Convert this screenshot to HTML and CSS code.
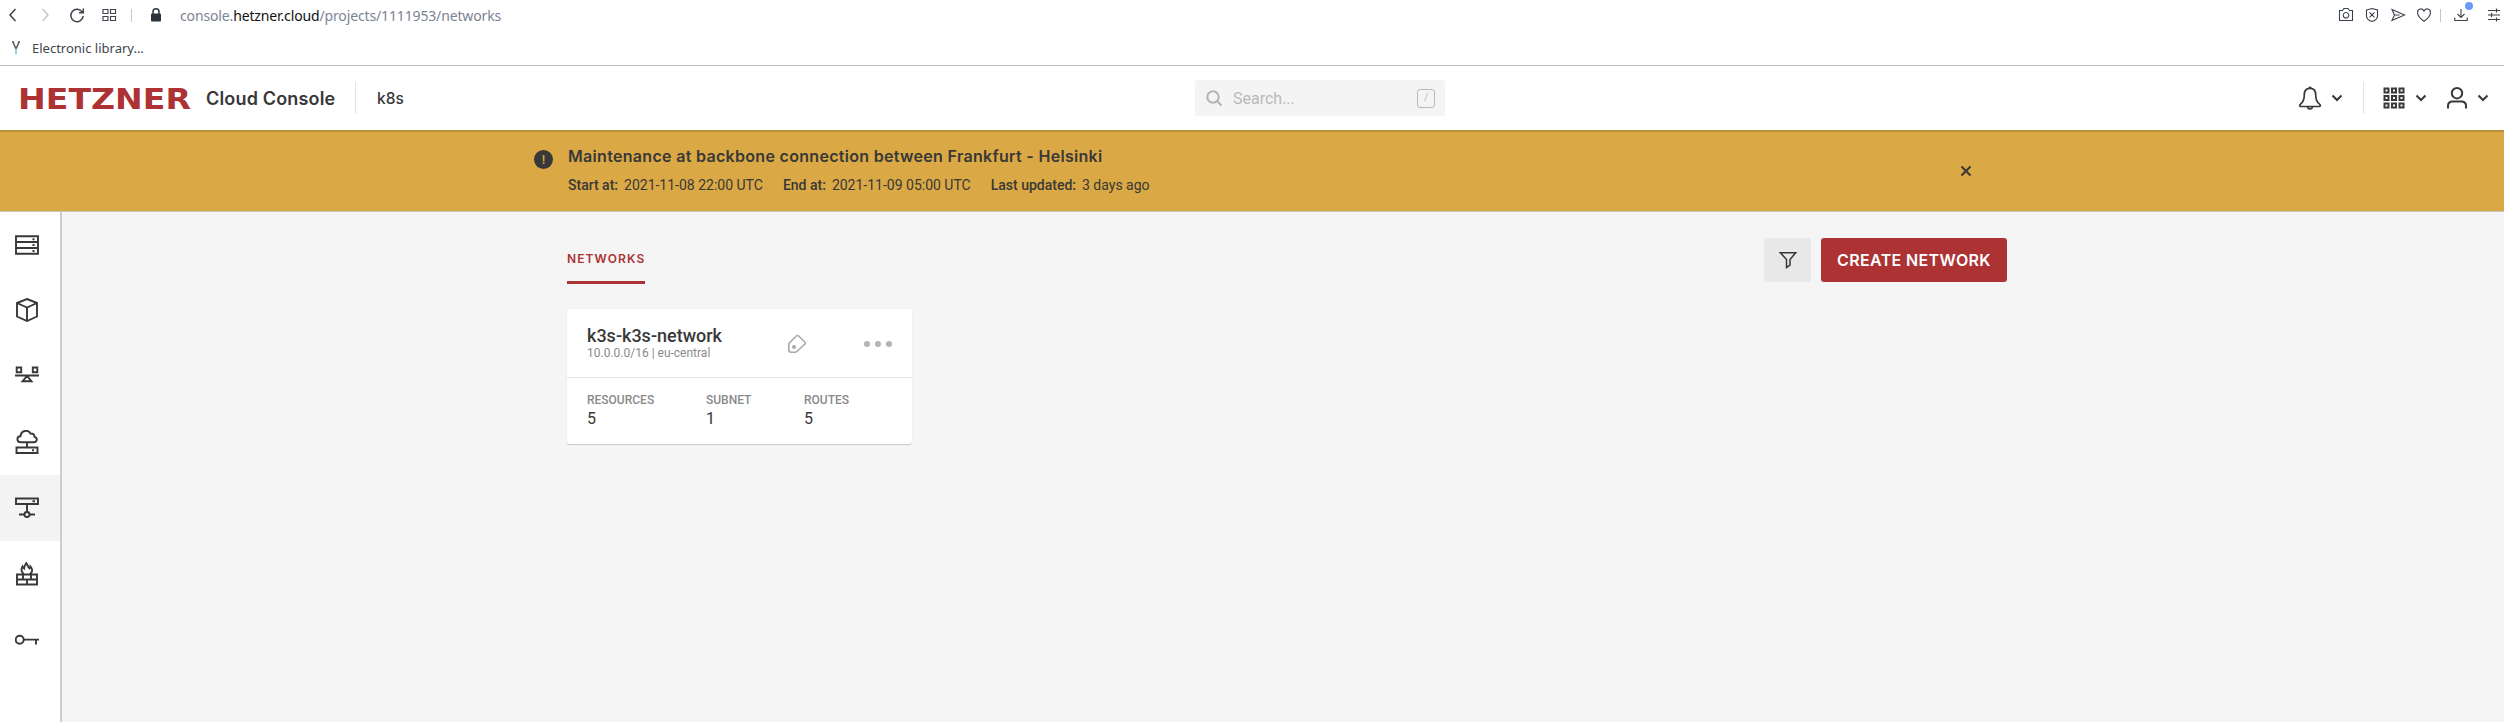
FILE: index.html
```html
<!DOCTYPE html>
<html lang="en">
<head>
<meta charset="utf-8">
<title>Networks - Cloud Console</title>
<link rel="stylesheet" href="styles.css">
</head>
<body>
<div class="browser">
  <div class="toolbar">
    <svg class="nav" width="18" height="18" viewBox="0 0 18 18"><path d="M11.500 3L6 9l5.500 6"/></svg>
    <svg class="nav faded" width="18" height="18" viewBox="0 0 18 18"><path d="M6.500 3L12 9l-5.500 6"/></svg>
    <svg class="nav" width="18" height="18" viewBox="0 0 18 18"><path d="M14.500 6.500A6.200 6.200 0 1 0 15.200 10M15.300 2.500v4.300h-4.300"/></svg>
    <svg class="nav thin" width="18" height="18" viewBox="0 0 18 18"><path d="M3 3.500h5v4H3zM10.500 3.500h5v4h-5zM3 10.500h5v4H3zM10.500 10.500h5v4h-5z"/></svg>
    <i class="sep"></i>
    <svg class="lock" width="12" height="14" viewBox="0 0 12 14"><path d="M3 6V3.800a3 3 0 0 1 6 0V6" fill="none" stroke="#2d333d" stroke-width="1.500"/><rect x="1" y="5.500" width="10" height="8" rx="1" fill="#2d333d"/></svg>
    <div class="url">console.<b>hetzner.cloud</b>/projects/1111953/networks</div>
    <div class="tools">
      <svg width="16" height="16" viewBox="0 0 16 16"><path d="M1.500 3.500h3l1.500-2h4l1.500 2h3v10h-13zM8 5.500a2.800 2.800 0 1 0 .01 0"/></svg>
      <svg width="16" height="16" viewBox="0 0 16 16"><path d="M2.500 3L8 1.500 13.500 3v6c0 2.500-2.500 4.500-5.500 5.500C5 13.500 2.500 11.500 2.500 9zM5.500 5.300l5 5M10.500 5.300l-5 5"/></svg>
      <svg width="16" height="16" viewBox="0 0 16 16"><path d="M2 2.500L14.500 8 2 13.500 4.500 8zM4.500 8h5"/></svg>
      <svg width="16" height="16" viewBox="0 0 16 16"><path d="M8 14.300C5.500 12.500 1.500 9 1.500 5.500c0-4 5-5 6.500-1.500 1.500-3.500 6.500-2.500 6.500 1.500 0 3.500-4 7-6.500 8.800z"/></svg>
      <i class="sep"></i>
      <span class="download"><svg width="16" height="16" viewBox="0 0 16 16"><path d="M8 2v8.500M4.500 7L8 10.500 11.500 7M1.800 10.500v3h12.400v-3"/></svg><i class="dot"></i></span>
      <svg width="16" height="16" viewBox="0 0 16 16"><path d="M2 3.500h12M2 8h12M2 12.500h12M10.500 1.500v4M5.500 6v4M10.500 10.500v4"/></svg>
    </div>
  </div>
  <div class="bookmarks">
    <svg width="10" height="14" viewBox="0 0 10 14"><path d="M1 1h2M7 1h2M2 1l3 7M8 1L5 8" fill="none" stroke="#555" stroke-width="1.500"/><path d="M5 7.500V13" stroke="#82bada" stroke-width="1.600"/></svg>
    <span class="bookmark">Electronic library…</span>
  </div>
</div>

<header class="header">
  <svg class="logo" width="173" height="44" viewBox="0 0 173 44"><text x="0" y="33" textLength="173" lengthAdjust="spacingAndGlyphs">HETZNER</text></svg>
  <span class="product">Cloud Console</span>
  <i class="rule"></i>
  <span class="project">k8s</span>
  <div class="search">
    <svg width="17" height="17" viewBox="0 0 17 17"><circle cx="7" cy="7" r="5.700"/><path d="M11 11l4.500 4.500"/></svg>
    <span class="placeholder">Search...</span>
    <kbd>/</kbd>
  </div>
  <div class="account">
    <svg class="bell" width="24" height="24" viewBox="0 0 24 24"><path d="M12 2.300C7.800 2.300 6.300 5.500 6.300 8.800c0 5-1 7.200-3.800 9.400-1.500 1.300-.8 2.300.3 2.300h18.400c1.100 0 1.800-1 .3-2.300-2.800-2.200-3.800-4.400-3.800-9.400 0-3.300-1.500-6.500-5.700-6.500zM9.500 21c.5 2.500 4.500 2.500 5 0M11 2c0-1 2-1 2 0"/></svg>
    <svg class="chev c1" width="12" height="8" viewBox="0 0 12 8"><path d="M1.500 1.500L6 6l4.500-4.500"/></svg>
    <i class="rule"></i>
    <svg class="apps" width="22" height="22" viewBox="0 0 22 22"><path d="M1.500 1.500h4v4h-4zM9 1.500h4v4H9zM16.500 1.500h4v4h-4zM1.500 9h4v4h-4zM9 9h4v4H9zM16.500 9h4v4h-4zM1.500 16.500h4v4h-4zM9 16.500h4v4H9zM16.500 16.500h4v4h-4z"/></svg>
    <svg class="chev c2" width="12" height="8" viewBox="0 0 12 8"><path d="M1.500 1.500L6 6l4.500-4.500"/></svg>
    <svg class="user" width="22" height="24" viewBox="0 0 22 24"><circle cx="11" cy="7.200" r="5.200"/><path d="M2 22.500V20c0-3 2-4.500 4.500-4.500h9c2.500 0 4.500 1.500 4.500 4.500v2.500"/></svg>
    <svg class="chev c3" width="12" height="8" viewBox="0 0 12 8"><path d="M1.500 1.500L6 6l4.500-4.500"/></svg>
  </div>
</header>

<section class="banner">
  <span class="alert">!</span>
  <div class="notice">
    <h2>Maintenance at backbone connection between Frankfurt - Helsinki</h2>
    <dl>
      <dt>Start at:</dt><dd>2021-11-08 22:00 UTC</dd>
      <dt>End at:</dt><dd>2021-11-09 05:00 UTC</dd>
      <dt>Last updated:</dt><dd>3 days ago</dd>
    </dl>
  </div>
  <svg class="close" width="12" height="12" viewBox="0 0 12 12"><path d="M1.500 1.500l9 9M10.500 1.500l-9 9"/></svg>
</section>

<div class="body">
  <nav class="side">
    <a><svg width="24" height="24" viewBox="0 0 24 24"><path d="M1 3.300h22v17.400H1zM1 9h22M1 15h22M17.500 6.200h2M17.500 12h2M17.500 18h2"/></svg></a>
    <a><svg width="24" height="24" viewBox="0 0 24 24"><path d="M12 1l10 4v13.500L12 23 2 18.500V5zM2 5l10 4.500L22 5M12 9.500V23"/></svg></a>
    <a><svg width="24" height="24" viewBox="0 0 24 24"><path d="M1.700 3.500h4.500v4.800H1.700zM17.800 3.500h4.500v4.800h-4.500zM0 11.500h24M12 12l-4.500 5.300h9z"/></svg></a>
    <a><svg width="24" height="24" viewBox="0 0 24 24"><path d="M6.500 12.300C1 12.300 1.500 6.500 5.500 6.200 6 .5 13-1 15.500 3.500c3 0 4 1.500 4 3.300 3.500 1 2.700 5.500-.8 5.500zM12 12.500V17M1.500 17.500h21V23h-21zM17 20.300h2"/></svg></a>
    <a class="active"><svg width="24" height="24" viewBox="0 0 24 24"><path d="M1 2.500h22v5.500H1zM17.500 5.200h2.500M12 8v8M4 18.500h5.500M14.500 18.500H20"/><circle cx="12" cy="18.500" r="2.500"/></svg></a>
    <a><svg width="24" height="24" viewBox="0 0 24 24"><path d="M2 12.500h20v10H2zM2 17.500h20M8 12.500v5M16 12.500v5M12 17.500v5M8.500 12C6 9.500 6 7 7.500 4.500c.5 1 1 1.500 1.700 2C9.500 4 10 2.500 11.300 1c1 2 1.500 3.500 3.200 5.500.7-.5 1-1.200 1-2 2.500 3 2 5.500-.5 7.500"/></svg></a>
    <a><svg width="24" height="24" viewBox="0 0 24 24"><circle cx="4.700" cy="11.800" r="4"/><path d="M9 11.600h15M21 12v4.500"/></svg></a>
  </nav>
  <main class="main">
    <div class="heading">
      <span class="tab">NETWORKS</span>
      <button class="filter"><svg width="20" height="18" viewBox="0 0 20 18"><path d="M2.300 1.700h15.400L12 8.500v5.700l-3.500 2.300v-8z"/></svg></button>
      <button class="create">CREATE NETWORK</button>
    </div>
    <article class="card">
      <div class="top">
        <div class="names"><h3>k3s-k3s-network</h3><p>10.0.0.0/16 | eu-central</p></div>
        <svg class="tag" width="20" height="20" viewBox="0 0 20 20"><path d="M1.800 9.500L9.300 2Q10.500 1 11.700 2L18 8.300Q18.800 9.200 18 10L9.800 17.500Q9 18.200 8 18.200H4.300Q1.800 18.200 1.800 15.500z"/><circle cx="7" cy="13" r="2"/></svg>
        <span class="more"><i></i><i></i><i></i></span>
      </div>
      <div class="stats">
        <div><small>RESOURCES</small><span>5</span></div>
        <div><small>SUBNET</small><span>1</span></div>
        <div><small>ROUTES</small><span>5</span></div>
      </div>
    </article>
  </main>
</div>
</body>
</html>
```
FILE: styles.css
```css
* { box-sizing: border-box; margin: 0; padding: 0; }
body { width: 2504px; height: 722px; overflow: hidden; background: #fff; color: #383838; font-family: Roboto, sans-serif; display: flex; flex-direction: column; }
svg { display: block; flex: none; fill: none; stroke: #383838; }
i { display: block; flex: none; }

.browser { height: 66px; flex: none; border-bottom: 1px solid #b9bcc5; font-family: "Noto Sans", sans-serif; }
.toolbar { height: 30px; display: flex; align-items: center; padding-left: 4px; }
.nav { stroke: #3d434c; stroke-width: 1.5; margin-right: 14px; }
.nav.faded { stroke: #c4c6ca; }
.nav.thin { stroke-width: 1.1; margin-right: 13px; }
.sep { width: 1px; height: 13px; background: #c4c6ca; }
.lock { margin: 0 18px 0 18px; stroke: none; }
.url { font-size: 14px; color: #7b8392; letter-spacing: -.14px; white-space: nowrap; }
.url b { font-weight: 400; color: #111; }
.tools { display: flex; align-items: center; gap: 10px; margin-left: auto; margin-right: 2px; }
.tools svg { stroke: #3b4049; stroke-width: 1.1; }
.tools .sep { margin-left: -2px; margin-right: 2px; }
.download { position: relative; margin-right: 7px; }
.dot { position: absolute; left: 12px; top: -5px; width: 8px; height: 8px; border-radius: 50%; background: #6a9bf8; }
.bookmarks { height: 35px; display: flex; align-items: center; padding: 1px 0 0 11px; }
.bookmark { font-size: 13px; color: #404650; margin-left: 11px; }

.header { height: 64px; flex: none; display: flex; align-items: center; padding-left: 18px; }
.logo { fill: #ac3234; stroke: none; font: 700 28.500px "DejaVu Sans", sans-serif; margin-right: 15px; }
.product { font: 600 18px Inter, sans-serif; letter-spacing: .17px; width: 149px; white-space: nowrap; }
.rule { width: 1px; height: 32px; background: #e3e3e3; }
.project { font: 500 15.500px Inter, sans-serif; margin-left: 21px; width: 28px; }
.search { width: 250px; height: 36px; margin-left: 790px; border-radius: 3px; background: #f4f4f4; display: flex; align-items: center; padding: 0 10px 0 11px; color: #b9b9b9; }
.search svg { stroke: #b3b3b3; stroke-width: 2; }
.placeholder { font-size: 16px; margin-left: 10px; flex: 1; }
kbd { width: 18px; height: 19px; border: 1px solid #b9b9b9; border-radius: 3px; font: 10px/16px Roboto, sans-serif; text-align: center; }
.account { margin-left: auto; display: flex; align-items: center; padding-right: 15px; }
.user, .apps { stroke-width: 2; }
.bell { stroke-width: 1.7; }
.chev { stroke-width: 2; }
.c1 { margin: 0 20px 0 9px; }
.c2 { margin: 0 19px 0 10px; }
.c3 { margin-left: 9px; }
.apps { margin-left: 19px; }

.banner { height: 82px; flex: none; border-top: 2px solid #b98f3b; border-bottom: 1px solid #c8c3b9; background: #daa844; display: flex; padding-left: 534px; }
.alert { width: 19px; height: 19px; margin-top: 18px; border-radius: 50%; background: #383838; color: #daa844; font: 500 13px/19px Roboto, sans-serif; text-align: center; }
.notice { margin-left: 15px; padding-top: 14px; width: 1392px; }
h2 { font: 600 16px/21px Inter, sans-serif; letter-spacing: .31px; white-space: nowrap; }
dl { display: flex; margin-top: 9px; font-size: 14px; line-height: 18px; white-space: nowrap; }
dt { font-weight: 500; margin-right: 6px; }
dd { margin-right: 20px; }
.close { margin-top: 33px; stroke-width: 2; }

.body { flex: 1; display: flex; min-height: 0; }
.side { width: 62px; border-right: 2px solid #ccc; }
.side a { height: 66px; display: flex; align-items: center; padding-left: 15px; }
.side a:first-child { height: 65px; }
.side .active { background: #f4f4f4; }
.side svg { stroke-width: 1.9; }
.main { flex: 1; background: #f5f5f5; padding: 26px 497px 0 505px; }
.heading { display: flex; height: 46px; }
.tab { width: 78px; height: 46px; border-bottom: 3px solid #ac3234; color: #ac3234; font: 600 12px/42px Inter, sans-serif; letter-spacing: 1.1px; margin-right: auto; white-space: nowrap; }
button { border: 0; border-radius: 3px; height: 44px; }
.filter { width: 47px; background: #e8e8e8; display: flex; align-items: center; justify-content: center; margin-right: 10px; }
.filter svg { stroke-width: 1.5; }
.create { width: 186px; background: #ac3234; color: #fff; font: 600 16px Inter, sans-serif; letter-spacing: .36px; padding-bottom: 1px; white-space: nowrap; }
.card { width: 345px; height: 135px; margin-top: 25px; background: #fff; border-radius: 3px; box-shadow: 0 1px 1px #c8c8c8; }
.top { height: 69px; border-bottom: 1px solid #e3e3e3; display: flex; padding: 0 20px; align-items: center; }
.names { width: 200px; margin-top: -1px; }
h3 { font-size: 18px; font-weight: 500; line-height: 21px; }
.names p { font-size: 12px; line-height: 14px; color: #8a8a8a; }
.tag { stroke: #a9a9a9; stroke-width: 1.6; margin-top: 2px; }
.tag circle { fill: #a9a9a9; stroke: none; }
.more { display: flex; gap: 5px; margin: 2px 0 0 auto; }
.more i { width: 6px; height: 6px; border-radius: 50%; background: #b3b3b3; }
.stats { display: grid; grid-template-columns: 119px 98px 1fr; padding: 15px 0 0 20px; }
.stats small { display: block; font-size: 12px; line-height: 15px; font-weight: 500; color: #8a8a8a; }
.stats span { display: block; font-size: 16px; line-height: 22px; }
```
